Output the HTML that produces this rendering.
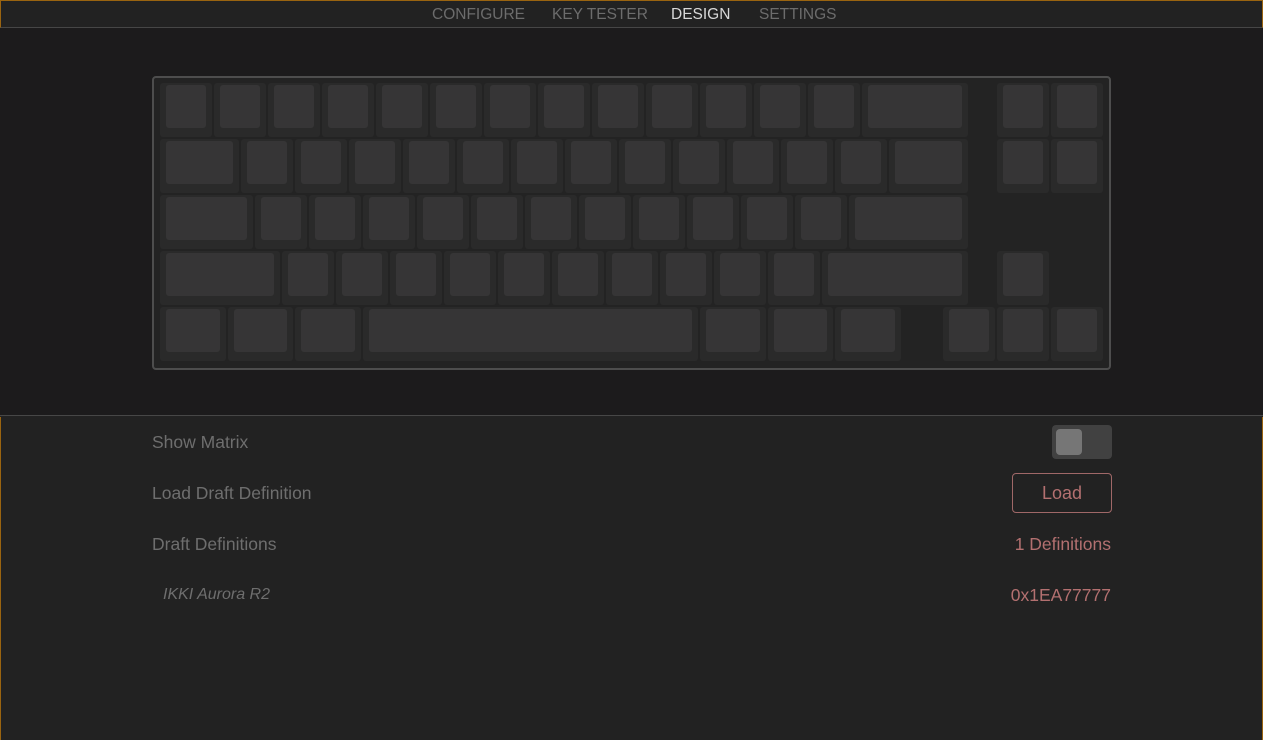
<!DOCTYPE html>
<html><head><meta charset="utf-8"><style>
*{margin:0;padding:0;box-sizing:border-box}
html,body{width:1263px;height:740px;overflow:hidden;background:#222;font-family:"Liberation Sans",sans-serif}
#nav{position:absolute;left:0;top:0;width:1263px;height:28px;background:#222;border:1px solid #9a6410;border-bottom:1px solid #464646;text-align:center;font-size:15.5px;color:#6c6c6c}
#nav span{position:absolute;top:5px}
#top{position:absolute;left:0;top:28px;width:1263px;height:388px;background:#1c1b1c;border-bottom:1px solid #474747}
#bot{position:absolute;left:0;top:417px;width:1263px;height:323px;border-left:1px solid #9a6410;border-right:1px solid #9a6410}
#kb{position:absolute;left:152px;top:76px;width:959px;height:294px;background:#232323;border:2px solid #4d4d4d;border-radius:4px}
.k{position:absolute;background:#2a2a2a;border-radius:3px}
.k i{position:absolute;left:6px;right:6px;top:2px;bottom:9px;background:#363536;border-radius:3px}
.lbl{position:absolute;left:152px;font-size:17.5px;color:#6e6e6e}
.r{position:absolute;right:152px;font-size:17.5px;color:#b37070}
</style></head><body>
<div id="nav"><span style="left:431px">CONFIGURE</span><span style="left:551px">KEY TESTER</span><span style="left:670px;color:#d8d8d8">DESIGN</span><span style="left:758px">SETTINGS</span></div>
<div id="top"></div>
<div id="kb"></div>
<div id="bot"></div>
<div class="lbl" style="top:432px">Show Matrix</div>
<div class="lbl" style="top:483px">Load Draft Definition</div>
<div class="lbl" style="top:534px">Draft Definitions</div>
<div class="lbl" style="top:586px;left:163px;font-style:italic;font-size:16px">IKKI Aurora R2</div>
<div style="position:absolute;left:1052px;top:425px;width:60px;height:34px;background:#414141;border-radius:4px"><div style="position:absolute;left:4px;top:4px;width:26px;height:26px;background:#767676;border-radius:4px"></div></div>
<div style="position:absolute;left:1012px;top:473px;width:100px;height:40px;border:1px solid #a06868;border-radius:4px;color:#b37070;font-size:18px;text-align:center;line-height:38px">Load</div>
<div class="r" style="top:534px">1 Definitions</div>
<div class="r" style="top:585px">0x1EA77777</div>
<script>
var kb=document.getElementById('kb');
function K(u,row,w){var d=document.createElement('div');d.className='k';
d.style.left=(160+u*54-154)+'px';d.style.top=(83+row*56-78)+'px';d.style.width=(w*54-2)+'px';d.style.height='54px';
d.innerHTML='<i></i>';kb.appendChild(d);}
var i;
for(i=0;i<13;i++)K(i,0,1);K(13,0,2);K(15.5,0,1);K(16.5,0,1);
K(0,1,1.5);for(i=0;i<12;i++)K(1.5+i,1,1);K(13.5,1,1.5);K(15.5,1,1);K(16.5,1,1);
K(0,2,1.75);for(i=0;i<11;i++)K(1.75+i,2,1);K(12.75,2,2.25);
K(0,3,2.25);for(i=0;i<10;i++)K(2.25+i,3,1);K(12.25,3,2.75);K(15.5,3,1);
K(0,4,1.25);K(1.25,4,1.25);K(2.5,4,1.25);K(3.75,4,6.25);K(10,4,1.25);K(11.25,4,1.25);K(12.5,4,1.25);
K(14.5,4,1);K(15.5,4,1);K(16.5,4,1);
</script>
</body></html>
